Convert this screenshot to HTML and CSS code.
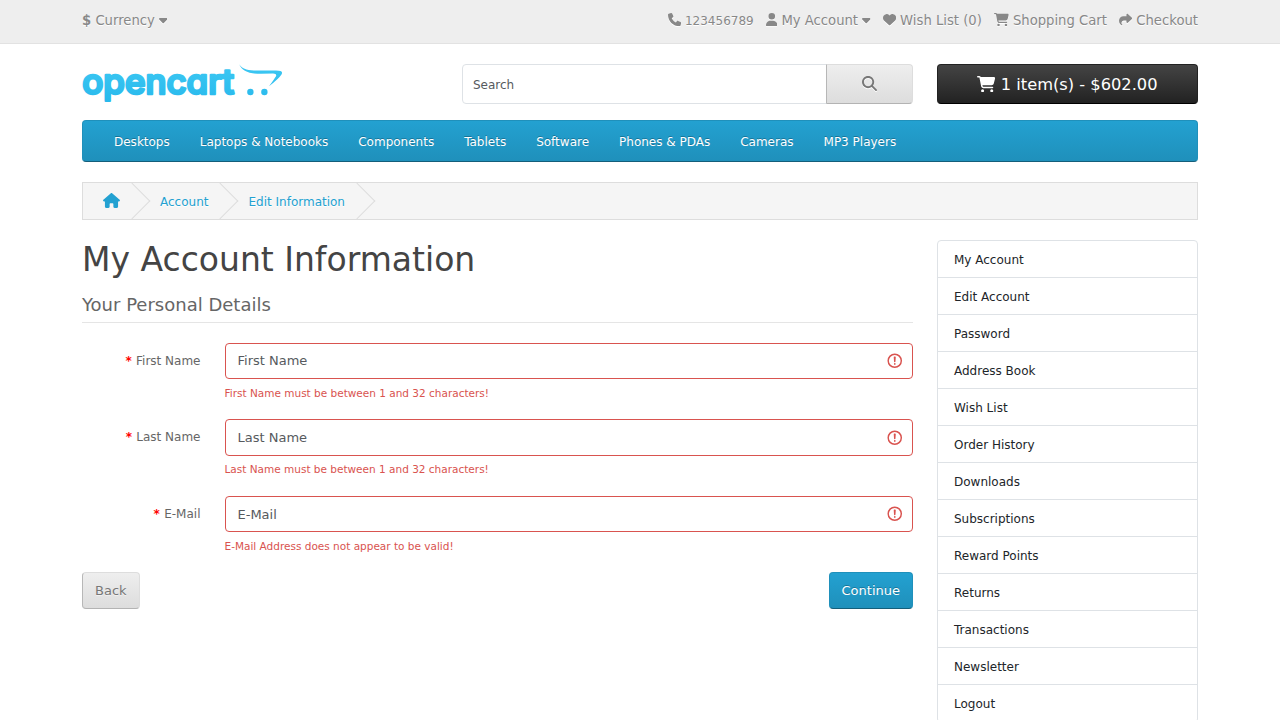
FILE: index.html
```html
<!DOCTYPE html>
<html lang="en">
<head>
<meta charset="utf-8">
<title>My Account Information</title>
<link rel="stylesheet" href="styles.css">
</head>
<body>
<svg class="defs" width="0" height="0" aria-hidden="true">
  <symbol id="caret" viewBox="0 0 320 512"><path d="M137.4 374.6c12.5 12.5 32.8 12.5 45.3 0l128-128c9.2-9.2 11.9-22.9 6.9-34.9s-16.6-19.8-29.6-19.8L32 192c-12.9 0-24.6 7.8-29.6 19.8s-2.2 25.7 6.9 34.9l128 128z"/></symbol>
  <symbol id="phone" viewBox="0 0 512 512"><path d="M164.9 24.6c-7.7-18.6-28-28.5-47.4-23.2l-88 24C12.1 30.2 0 46 0 64C0 311.4 200.6 512 448 512c18 0 33.8-12.1 38.6-29.5l24-88c5.3-19.4-4.6-39.7-23.2-47.4l-96-40c-16.3-6.8-35.2-2.1-46.3 11.6L304.7 368C234.3 334.7 177.3 277.7 144 207.3L193.3 167c13.7-11.2 18.4-30 11.6-46.3l-40-96z"/></symbol>
  <symbol id="user" viewBox="0 0 448 512"><path d="M224 256A128 128 0 1 0 224 0a128 128 0 1 0 0 256zm-45.7 48C79.8 304 0 383.8 0 482.3C0 498.7 13.3 512 29.7 512H418.3c16.4 0 29.7-13.3 29.7-29.7C448 383.8 368.2 304 269.7 304H178.3z"/></symbol>
  <symbol id="heart" viewBox="0 0 512 512"><path d="M47.6 300.4L228.3 469.1c7.5 7 17.4 10.9 27.7 10.9s20.2-3.9 27.7-10.9L464.4 300.4c30.4-28.3 47.6-68 47.6-109.5v-5.8c0-69.9-50.5-129.5-119.4-141C347 36.5 300.6 51.4 268 84L256 96 244 84c-32.6-32.6-79-47.5-124.6-39.9C50.5 55.6 0 115.2 0 185.1v5.8c0 41.5 17.2 81.2 47.6 109.5z"/></symbol>
  <symbol id="cart" viewBox="0 0 576 512"><path d="M0 24C0 10.7 10.7 0 24 0H69.5c22 0 41.5 12.8 50.6 32h411c26.3 0 45.5 25 38.6 50.4l-41 152.3c-8.5 31.4-37 53.3-69.5 53.3H170.7l5.4 28.5c2.2 11.3 12.1 19.5 23.6 19.5H488c13.3 0 24 10.7 24 24s-10.7 24-24 24H199.7c-34.6 0-64.3-24.6-70.7-58.5L77.4 54.5c-.7-3.8-4-6.5-7.9-6.5H24C10.7 48 0 37.3 0 24zM128 464a48 48 0 1 1 96 0 48 48 0 1 1 -96 0zm336-48a48 48 0 1 1 0 96 48 48 0 1 1 0-96z"/></symbol>
  <symbol id="share" viewBox="0 0 512 512"><path d="M307 34.8c-11.5 5.1-19 16.6-19 29.2v64H176C78.8 128 0 206.8 0 304C0 417.3 81.5 467.9 100.2 478.1c2.5 1.4 5.3 1.9 8.1 1.9c10.9 0 19.7-8.9 19.7-19.7c0-7.5-4.3-14.4-9.8-19.5C108.8 431.9 96 414.4 96 384c0-53 43-96 96-96h96v64c0 12.6 7.4 24.1 19 29.2s25 3 34.4-5.4l160-144c6.7-6.1 10.6-14.7 10.6-23.8s-3.8-17.7-10.6-23.8l-160-144c-9.4-8.5-22.9-10.6-34.4-5.4z"/></symbol>
  <symbol id="search" viewBox="0 0 512 512"><path d="M416 208c0 45.9-14.9 88.3-40 122.7L502.6 457.4c12.5 12.5 12.5 32.8 0 45.3s-32.8 12.5-45.3 0L330.7 376c-34.4 25.2-76.8 40-122.7 40C93.1 416 0 322.9 0 208S93.1 0 208 0S416 93.1 416 208zM208 352a144 144 0 1 0 0-288 144 144 0 1 0 0 288z"/></symbol>
  <symbol id="home" viewBox="0 0 576 512"><path d="M575.8 255.5c0 18-15 32.1-32 32.1h-32l.7 160.2c0 2.7-.2 5.4-.5 8.1V472c0 22.1-17.9 40-40 40H456c-1.1 0-2.2 0-3.3-.1c-1.4 .1-2.8 .1-4.2 .1H416 392c-22.1 0-40-17.9-40-40V448 384c0-17.7-14.3-32-32-32H256c-17.7 0-32 14.3-32 32v64 24c0 22.1-17.9 40-40 40H160 128.1c-1.5 0-3-.1-4.5-.2c-1.2 .1-2.4 .2-3.6 .2H104c-22.1 0-40-17.9-40-40V360c0-.9 0-1.9 .1-2.8V287.6H32c-18 0-32-14-32-32.1c0-9 3-17 10-24L266.4 8c7-7 15-8 22-8s15 2 21 7L564.8 231.5c8 7 12 15 11 24z"/></symbol>
  <symbol id="invalid" viewBox="0 0 12 12"><circle cx="6" cy="6" r="4.5" fill="none" stroke="#d9534f"/><path fill="none" stroke="#d9534f" stroke-linejoin="round" d="M5.8 3.6h.4L6 6.5z"/><circle cx="6" cy="8.2" r=".6" fill="#d9534f"/></symbol>
</svg>

<nav class="topbar">
  <div class="container topbar-row">
    <a class="top-item"><strong>$</strong><span>Currency</span><svg class="ic caret"><use href="#caret"/></svg></a>
    <div class="top-links">
      <a class="top-item"><svg class="ic sq"><use href="#phone"/></svg><span class="phone-number">123456789</span></a>
      <a class="top-item"><svg class="ic user"><use href="#user"/></svg><span>My Account</span><svg class="ic caret"><use href="#caret"/></svg></a>
      <a class="top-item"><svg class="ic sq"><use href="#heart"/></svg><span>Wish List (0)</span></a>
      <a class="top-item"><svg class="ic wide"><use href="#cart"/></svg><span>Shopping Cart</span></a>
      <a class="top-item"><svg class="ic sq"><use href="#share"/></svg><span>Checkout</span></a>
    </div>
  </div>
</nav>

<header class="container header">
  <svg class="logo" viewBox="0 0 202 40">
    <defs><linearGradient id="sky" gradientUnits="userSpaceOnUse" x1="0" y1="0" x2="0" y2="38"><stop offset="0" stop-color="#3dc8f3"/><stop offset="1" stop-color="#28b9ec"/></linearGradient></defs>
    <text class="logo-text" x=".2" y="29.900" textLength="152" lengthAdjust="spacingAndGlyphs">opencart</text>
    <path fill="url(#sky)" d="M157.2.3C160 4.500 164 6.300 172 6.500L194 6.500Q202 6.500 199.500 10.500Q197 14.500 187 22.300Q192 15.500 194 12.200Q195 9.500 191 9.400L179 9.800C166 9.800 160 7 157.200.3Z"/>
    <circle fill="url(#sky)" cx="168.400" cy="28" r="3.200"/><circle fill="url(#sky)" cx="182.400" cy="28" r="3.200"/>
  </svg>
  <div class="search">
    <input class="search-input" type="text" placeholder="Search">
    <button class="search-btn"><svg class="search-ic"><use href="#search"/></svg></button>
  </div>
  <button class="cart-btn"><svg class="cart-ic"><use href="#cart"/></svg><span>1 item(s) - $602.00</span></button>
</header>

<main class="container">
  <nav class="menu">
    <a>Desktops</a><a>Laptops &amp; Notebooks</a><a>Components</a><a>Tablets</a><a>Software</a><a>Phones &amp; PDAs</a><a>Cameras</a><a>MP3 Players</a>
  </nav>
  <ul class="breadcrumb">
    <li><svg class="home-ic"><use href="#home"/></svg></li>
    <li>Account</li>
    <li>Edit Information</li>
  </ul>
  <div class="columns">
    <section class="content">
      <h1>My Account Information</h1>
      <h2>Your Personal Details</h2>
      <div class="field">
        <label><b>*</b> First Name</label>
        <div class="control"><div class="box"><input type="text" placeholder="First Name"><svg class="invalid"><use href="#invalid"/></svg></div><p>First Name must be between 1 and 32 characters!</p></div>
      </div>
      <div class="field">
        <label><b>*</b> Last Name</label>
        <div class="control"><div class="box"><input type="text" placeholder="Last Name"><svg class="invalid"><use href="#invalid"/></svg></div><p>Last Name must be between 1 and 32 characters!</p></div>
      </div>
      <div class="field">
        <label><b>*</b> E-Mail</label>
        <div class="control"><div class="box"><input type="text" placeholder="E-Mail"><svg class="invalid"><use href="#invalid"/></svg></div><p>E-Mail Address does not appear to be valid!</p></div>
      </div>
      <div class="actions"><button class="btn light">Back</button><button class="btn primary">Continue</button></div>
    </section>
    <aside class="side">
      <a>My Account</a><a>Edit Account</a><a>Password</a><a>Address Book</a><a>Wish List</a><a>Order History</a><a>Downloads</a><a>Subscriptions</a><a>Reward Points</a><a>Returns</a><a>Transactions</a><a>Newsletter</a><a>Logout</a>
    </aside>
  </div>
</main>
</body>
</html>
```

FILE: styles.css
```css
*, *::before, *::after { box-sizing: border-box; }
html, body { height: 100%; }
body {
  margin: 0;
  overflow: hidden;
  background: #fff;
  color: #666;
  font: 12px/18px "DejaVu Sans", sans-serif;
}
button, input { font-family: inherit; margin: 0; }
.defs { display: block; }
.container { width: 1116px; margin: 0 auto; }

.topbar { height: 44px; background: #eee; border-bottom: 1px solid #e2e2e2; }
.topbar-row { display: flex; justify-content: space-between; padding-top: 10px; }
.top-links { display: flex; gap: 12px; }
.top-item {
  display: flex; align-items: center; gap: 4.200px;
  height: 21px; font-size: 13.200px; color: #888; text-shadow: 0 1px #fff;
}
.phone-number { font-size: 12px; }
.ic { height: 13.200px; margin-bottom: 1px; fill: #888; filter: drop-shadow(0 1px 0 #fff); }
.sq { width: 13.200px; }
.user { width: 11.550px; }
.wide { width: 14.850px; }
.caret { width: 8.500px; height: 13.600px; margin-bottom: 2px; }

.header { display: flex; height: 76px; padding-top: 20px; }
.logo { width: 202px; height: 40px; margin-right: 178px; overflow: visible; }
.logo-text {
  font: 500 34.500px Inter, sans-serif;
  font-feature-settings: "cv11";
  fill: url(#sky); stroke: url(#sky); stroke-width: 2.600; stroke-linejoin: round;
}
.search { display: flex; width: 451px; height: 40px; margin-right: 24px; }
.search-input {
  width: 365px; padding: 2px 10px 0; font-size: 12px;
  border: 1px solid #dee2e6; border-radius: 4px 0 0 4px;
}
::placeholder { color: #565a5e; opacity: 1; }
.search-btn {
  display: flex; align-items: center; justify-content: center;
  width: 87px; margin-left: -1px; padding: 0 0 2px;
  background: linear-gradient(#eee, #ddd);
  border: 1px solid; border-color: #ddd #ddd #b3b3b3 #b7b7b7;
  border-radius: 0 4px 4px 0;
}
.search-ic { width: 15px; height: 15px; fill: #777; filter: drop-shadow(0 1px 0 #fff); }
.cart-btn {
  display: flex; align-items: center; justify-content: center; gap: 5px;
  width: 261px; height: 40px; padding: 0;
  color: #fff; font-size: 16.250px;
  background: linear-gradient(#444, #222);
  border: 1px solid; border-color: #222 #222 #000;
  border-radius: 4px;
}
.cart-ic { width: 18.300px; height: 16.250px; fill: #fff; }

.menu {
  display: flex; gap: 30px; height: 42px; padding: 12px 31px;
  color: #fff; text-shadow: 0 -1px rgba(0, 0, 0, .25);
  background: linear-gradient(#23a1d1, #1f90bb);
  border: 1px solid; border-color: #1f90bb #1f90bb #145e7a;
  border-radius: 4px;
}
.breadcrumb {
  display: flex; height: 38px; margin: 20px 0; padding: 0; list-style: none;
  overflow: hidden; color: #23a1d1; text-shadow: 0 1px #fff;
  background: #f5f5f5; border: 1px solid #ddd;
}
.breadcrumb li { position: relative; padding: 10px 12px 0 28px; }
.breadcrumb li:first-child { padding-left: 20px; }
.breadcrumb li::after {
  content: ""; position: absolute; top: 5px; right: -13px;
  width: 26px; height: 26px;
  border: 1px solid #ddd; border-width: 1px 1px 0 0;
  transform: rotate(45deg);
}
.home-ic { display: block; width: 17px; height: 15px; fill: #23a1d1; }

.columns { display: flex; justify-content: space-between; align-items: flex-start; }
.content { width: 831px; }
h1 { margin: 0; font-size: 33px; line-height: 39px; font-weight: 400; color: #444; }
h2 {
  height: 34px; margin: 10px 0 19.900px; padding-top: 4px;
  font-size: 18px; line-height: 24px; font-weight: 400;
  border-bottom: 1px solid #e5e5e5;
}
.field { display: flex; gap: 24px; height: 76.550px; }
.field label { width: 118.500px; padding-top: 9px; text-align: right; }
.field b { color: #f00; margin-right: .5px; }
.control { flex: 1; }
.box {
  display: flex; align-items: center; justify-content: space-between;
  height: 36.450px; padding: 0 9px .3px 12px;
  border: 1px solid #d9534f; border-radius: 4px;
}
.box input { width: 500px; padding: 0; border: 0; outline: 0; background: none; font-size: 13px; }
.invalid { width: 17.500px; height: 17.500px; }
.control p { margin: 3.500px 0 0; font-size: 10.500px; line-height: 20px; color: #d9534f; }
.actions { display: flex; justify-content: space-between; margin-top: -.2px; }
.btn { height: 37px; padding: 0 12px; font-size: 13px; border: 1px solid; border-radius: 4px; }
.light {
  color: #777; text-shadow: 0 1px rgba(255, 255, 255, .5);
  background: linear-gradient(#eee, #ddd);
  border-color: #ddd #ddd #b3b3b3 #b7b7b7;
}
.primary {
  color: #fff; text-shadow: 0 -1px rgba(0, 0, 0, .25);
  background: linear-gradient(#23a1d1, #1f90bb);
  border-color: #1f90bb #1f90bb #145e7a;
}
.side { width: 261px; border: 1px solid #dee2e6; border-radius: 4px; color: #212529; }
.side a { display: block; height: 37px; padding: 10px 16px 0; border-bottom: 1px solid #dee2e6; }
.side a:last-child { border-bottom: 0; }
```
